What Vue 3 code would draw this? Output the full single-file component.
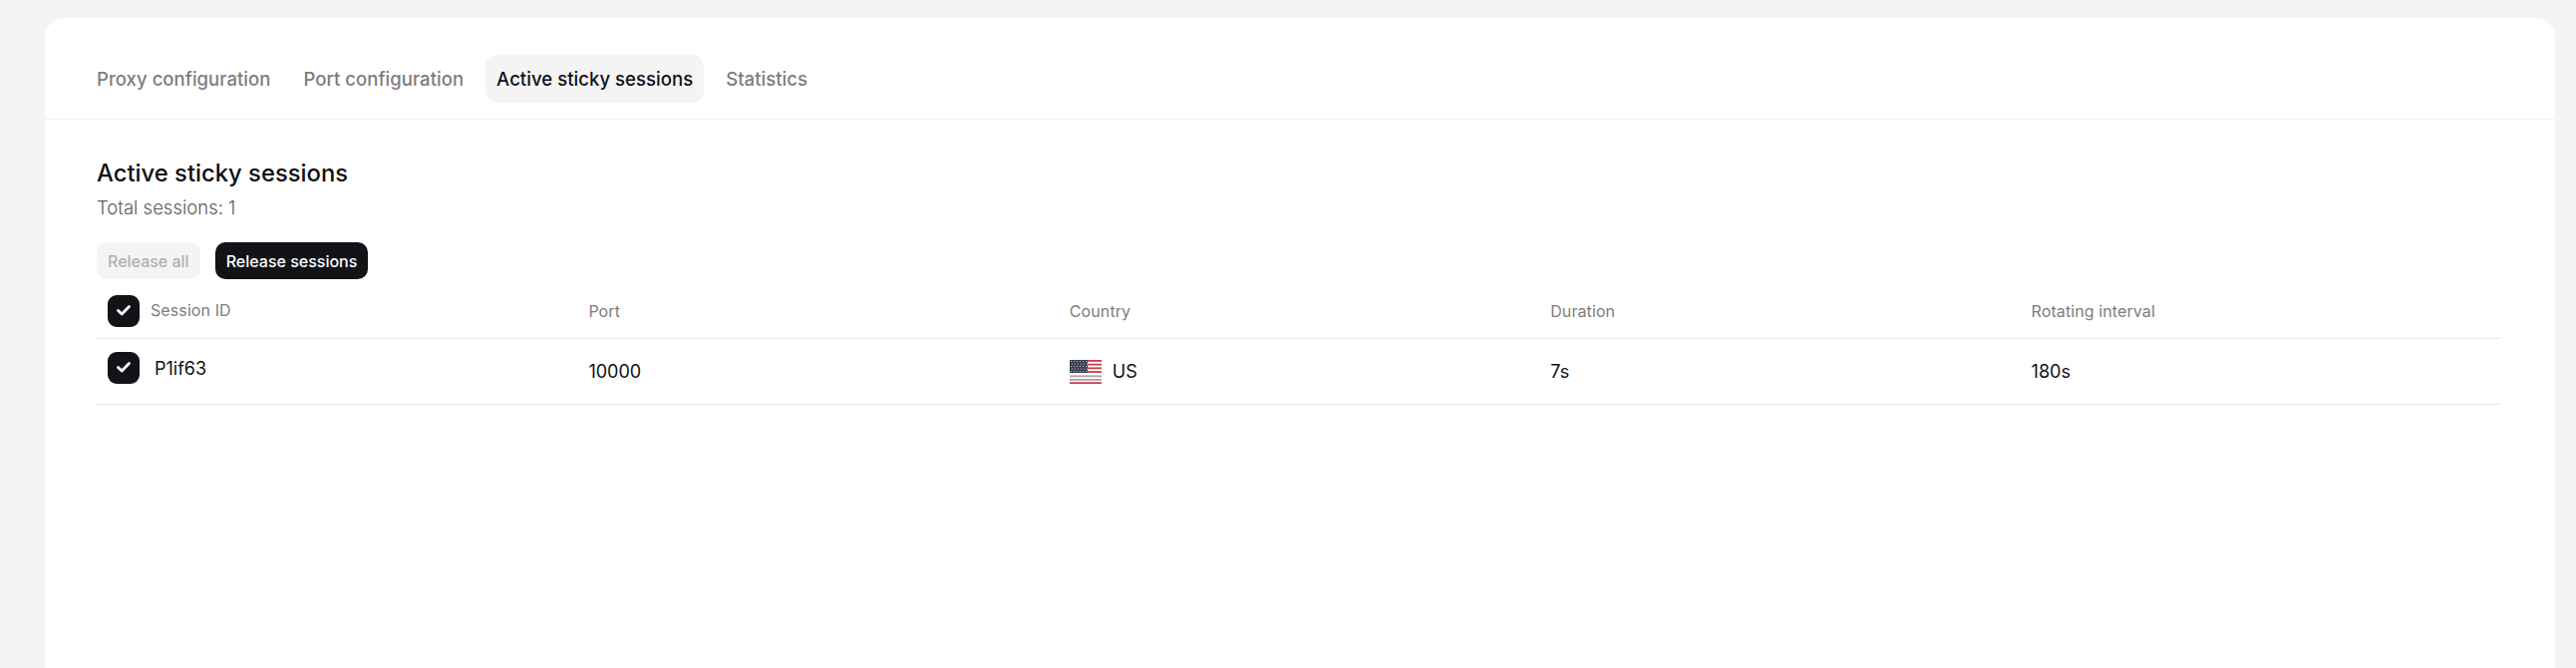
<script setup>
const tabs = [
  { label: 'Proxy configuration' },
  { label: 'Port configuration' },
  { label: 'Active sticky sessions', active: true },
  { label: 'Statistics' }
]
const headers = ['Port', 'Country', 'Duration', 'Rotating interval']
const stripes = [
  { y: 0, fill: '#c9414d' },
  { y: 3.7, fill: '#c9414d' },
  { y: 7.4, fill: '#c9414d' },
  { y: 11.1, fill: '#c9414d' },
  { y: 15.4, fill: '#a9a4a6' },
  { y: 19, fill: '#a9a4a6' },
  { y: 22.2, fill: '#c9414d' }
]
const stars = []
for (let r = 0; r < 5; r++) {
  for (let c = 0; c < 6; c++) {
    stars.push({ id: r + '-' + c, x: 1.5 + c * 3 + (r % 2 ? 1 : 0), y: 1.5 + r * 2.5 })
  }
}
</script>

<template>
  <div class="page">
    <main class="card">
      <nav class="tabs">
        <button v-for="tab in tabs" :key="tab.label" class="tab" :class="{ active: tab.active }">{{ tab.label }}</button>
      </nav>
      <section class="content">
        <h1 class="title">Active sticky sessions</h1>
        <p class="total">Total sessions: 1</p>
        <div class="actions">
          <button class="btn disabled">Release all</button>
          <button class="btn primary">Release sessions</button>
        </div>
        <div class="table">
          <div class="row head">
            <div class="cell first">
              <span class="check">
                <svg viewBox="0 0 32 32" width="32" height="32"><path d="M10.5 15.5l3.7 3.5 7.3-7.5" fill="none" stroke="#fff" stroke-width="2.8" stroke-linecap="round" stroke-linejoin="round" /></svg>
              </span>
              <span class="head-label">Session ID</span>
            </div>
            <div v-for="h in headers" :key="h" class="cell">{{ h }}</div>
          </div>
          <div class="row body">
            <div class="cell first top">
              <span class="check">
                <svg viewBox="0 0 32 32" width="32" height="32"><path d="M10.5 15.5l3.7 3.5 7.3-7.5" fill="none" stroke="#fff" stroke-width="2.8" stroke-linecap="round" stroke-linejoin="round" /></svg>
              </span>
              <span class="sid">P1if63</span>
            </div>
            <div class="cell">10000</div>
            <div class="cell country">
              <svg class="flag" viewBox="0 0 32 24" width="32" height="24">
                <rect width="32" height="24" fill="#fff" />
                <rect v-for="s in stripes" :key="s.y" x="0" :y="s.y" width="32" height="1.85" :fill="s.fill" />
                <rect width="18" height="13" fill="#3c3f52" />
                <circle v-for="d in stars" :key="d.id" :cx="d.x" :cy="d.y" r="0.55" fill="#d8d8de" />
              </svg>
              <span>US</span>
            </div>
            <div class="cell">7s</div>
            <div class="cell">180s</div>
          </div>
        </div>
      </section>
    </main>
  </div>
</template>

<style>
html, body { margin: 0; background: #f4f4f4; }
</style>

<style scoped>
.page {
  height: 670px;
  box-sizing: border-box;
  padding: 18px 21px 0 45px;
  overflow: hidden;
  font-family: Inter, "Liberation Sans", sans-serif;
}
.card {
  height: 652px;
  background: #fff;
  border-radius: 20px 20px 0 0;
}
.tabs {
  display: flex;
  gap: 11px;
  height: 102px;
  box-sizing: border-box;
  padding: 37px 41px 0;
  border-bottom: 1px solid #f1f1f1;
}
.tab {
  height: 48px;
  padding: 0 11px;
  border: 0;
  border-radius: 12px;
  background: transparent;
  color: #7d7d7d;
  font: 500 18.5px Inter, sans-serif;
  letter-spacing: 0.05px;
}
.tab.active { background: #f4f4f4; color: #0f1014; }
.content { padding: 36px 54px 0 52px; }
.title {
  margin: 0;
  font-size: 23.8px;
  line-height: 36px;
  font-weight: 500;
  color: #0f1014;
}
.total {
  margin: 3px 0 0;
  font-size: 18.5px;
  line-height: 26px;
  font-weight: 300;
  color: #5c5c5c;
}
.actions { display: flex; gap: 15px; margin-top: 22px; }
.btn {
  height: 37px;
  padding: 0 11px;
  border: 0;
  border-radius: 10px;
  font: 500 16px Inter, sans-serif;
}
.disabled { background: #f4f4f4; color: #b0b0b0; }
.primary { background: #121317; color: #fff; }
.row {
  display: grid;
  grid-template-columns: repeat(5, 1fr);
  border-bottom: 1px solid #e8e8e8;
}
.row.head { height: 60px; box-sizing: border-box; padding-top: 16px; color: #7d7d7d; font-size: 16px; letter-spacing: 0.1px; }
.row.head .cell { align-self: start; height: 32px; }
.row.body { height: 66px; box-sizing: border-box; color: #0f1014; font-size: 18px; }
.cell {
  display: flex;
  align-items: center;
  padding: 0 11px;
}
.first { gap: 11px; }
.head-label { margin-bottom: 3px; }
.top { align-items: flex-start; padding-top: 13px; }
.sid { line-height: 34px; margin-left: 4px; }
.check {
  width: 32px;
  height: 32px;
  border-radius: 9px;
  background: #121317;
  flex: none;
}
.check svg { display: block; }
.country { gap: 11px; }
.flag { flex: none; }
</style>
